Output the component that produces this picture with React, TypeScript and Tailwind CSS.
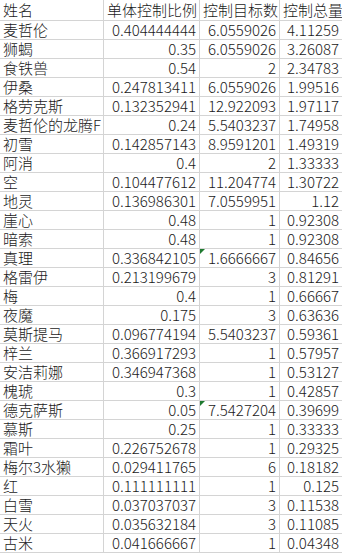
import React from 'react';

type Row = { name: string; ratio: string; target: string; total: string; flag?: boolean };

const rows: Row[] = [
  { name: '麦哲伦', ratio: '0.404444444', target: '6.0559026', total: '4.11259' },
  { name: '狮蝎', ratio: '0.35', target: '6.0559026', total: '3.26087' },
  { name: '食铁兽', ratio: '0.54', target: '2', total: '2.34783' },
  { name: '伊桑', ratio: '0.247813411', target: '6.0559026', total: '1.99516' },
  { name: '格劳克斯', ratio: '0.132352941', target: '12.922093', total: '1.97117' },
  { name: '麦哲伦的龙腾F', ratio: '0.24', target: '5.5403237', total: '1.74958' },
  { name: '初雪', ratio: '0.142857143', target: '8.9591201', total: '1.49319' },
  { name: '阿消', ratio: '0.4', target: '2', total: '1.33333' },
  { name: '空', ratio: '0.104477612', target: '11.204774', total: '1.30722' },
  { name: '地灵', ratio: '0.136986301', target: '7.0559951', total: '1.12' },
  { name: '崖心', ratio: '0.48', target: '1', total: '0.92308' },
  { name: '暗索', ratio: '0.48', target: '1', total: '0.92308' },
  { name: '真理', ratio: '0.336842105', target: '1.6666667', total: '0.84656', flag: true },
  { name: '格雷伊', ratio: '0.213199679', target: '3', total: '0.81291' },
  { name: '梅', ratio: '0.4', target: '1', total: '0.66667' },
  { name: '夜魔', ratio: '0.175', target: '3', total: '0.63636' },
  { name: '莫斯提马', ratio: '0.096774194', target: '5.5403237', total: '0.59361' },
  { name: '梓兰', ratio: '0.366917293', target: '1', total: '0.57957' },
  { name: '安洁莉娜', ratio: '0.346947368', target: '1', total: '0.53127' },
  { name: '槐琥', ratio: '0.3', target: '1', total: '0.42857' },
  { name: '德克萨斯', ratio: '0.05', target: '7.5427204', total: '0.39699', flag: true },
  { name: '慕斯', ratio: '0.25', target: '1', total: '0.33333' },
  { name: '霜叶', ratio: '0.226752678', target: '1', total: '0.29325' },
  { name: '梅尔3水獭', ratio: '0.029411765', target: '6', total: '0.18182' },
  { name: '红', ratio: '0.111111111', target: '1', total: '0.125' },
  { name: '白雪', ratio: '0.037037037', target: '3', total: '0.11538' },
  { name: '天火', ratio: '0.035632184', target: '3', total: '0.11085' },
  { name: '古米', ratio: '0.041666667', target: '1', total: '0.04348' },
];

const cell =
  'border-r border-b border-[#d4d4d4] flex items-center overflow-hidden whitespace-nowrap text-[15px] leading-[18px] font-light';
const textCell = `${cell} justify-start pl-[3px]`;
const numCell = `${cell} justify-end pr-[3px]`;

export default function App() {
  return (
    <div
      className="w-[342px] h-[554px] overflow-hidden bg-white text-[#1a1a1a]"
      style={{ fontFamily: '"Noto Sans CJK SC", "Noto Sans", sans-serif' }}
    >
      <div className="grid grid-cols-[104px_96px_80px_63px] w-[343px]">
        {/* header */}
        <div className={`${textCell} h-[21px]`}>姓名</div>
        <div className={`${textCell} h-[21px]`}>单体控制比例</div>
        <div className={`${textCell} h-[21px]`}>控制目标数</div>
        <div className={`${textCell} h-[21px]`}>控制总量</div>

        {rows.map((r) => (
          <React.Fragment key={r.name}>
            <div className={`${textCell} h-[19px]`}>{r.name}</div>
            <div className={`${numCell} h-[19px]`}>{r.ratio}</div>
            <div className={`${numCell} h-[19px] relative`}>
              {r.flag && (
                <span className="absolute left-0 top-0 w-0 h-0 border-t-[5px] border-r-[5px] border-t-[#1f7a30] border-r-transparent" />
              )}
              {r.target}
            </div>
            <div className={`${numCell} h-[19px]`}>{r.total}</div>
          </React.Fragment>
        ))}
      </div>
    </div>
  );
}
